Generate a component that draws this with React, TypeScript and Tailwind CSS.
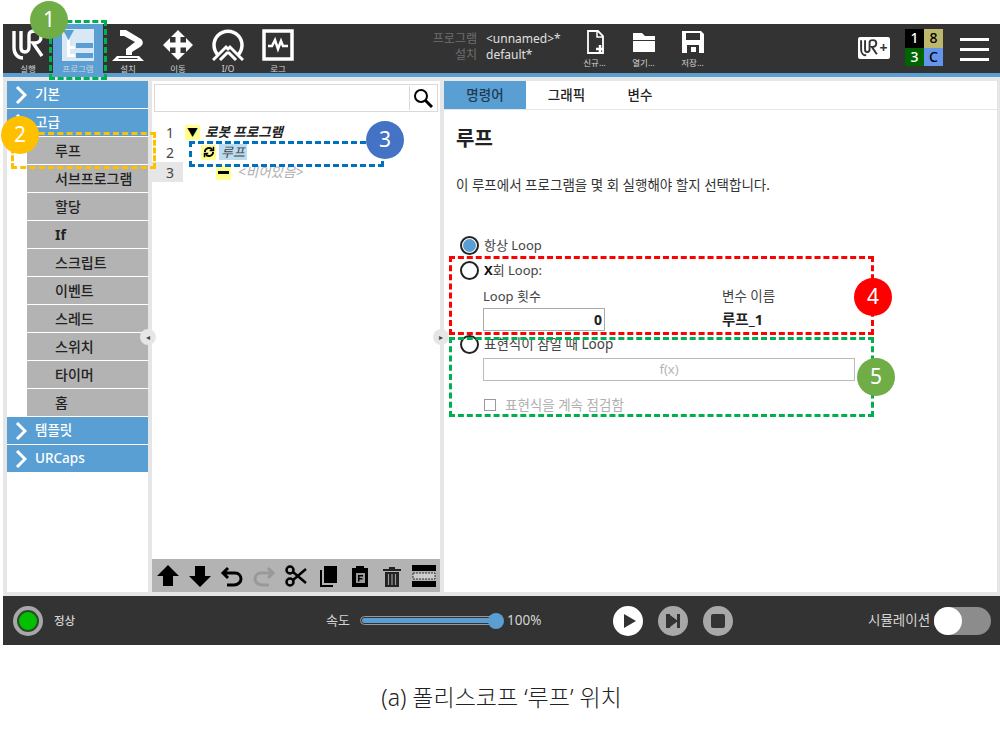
const FONT = "font-['Noto_Sans','Noto_Sans_CJK_KR',sans-serif]";

const SUB_ITEMS = ["루프", "서브프로그램", "할당", "If", "스크립트", "이벤트", "스레드", "스위치", "타이머", "홈"];

function UrLogo({ className }: { className?: string }) {
  return (
    <svg viewBox="0 0 32 32" className={className} fill="none" stroke="currentColor" strokeWidth="3.4">
      <path d="M2 2v17c0 6 4 10 9 10" />
      <path d="M9 2v17c0 3 2 4 4 4s4-2 4-5V6c0-3 3-4 6-4 4 0 6 3 6 6s-2 6-6 6h-2l9 13" />
    </svg>
  );
}

function ProgramIcon() {
  return (
    <svg viewBox="0 0 32 32" className="h-8 w-8">
      <rect x="0" y="0" width="32" height="32" fill="#d9e8f5" />
      <path d="M1 1h11L6.500 11z" fill="#5a9fd4" />
      <path d="M5 11h3v14h5v3H5zM8 17h5v3H8z" fill="#fff" />
      <rect x="14" y="14" width="17" height="5" fill="#5a9fd4" />
      <rect x="14" y="24" width="17" height="5" fill="#5a9fd4" />
    </svg>
  );
}

function RobotIcon() {
  return (
    <svg viewBox="0 0 34 32" className="h-8 w-[34px]" fill="#fff">
      <path d="M9 1h6l15 9c3 3 2 6-1 8l-8 5v3h-6v-6l9-7L13 7H9z" />
      <path d="M6 27h22l5 5H1zM7 30h20l-1-1H8z" fillRule="evenodd" />
    </svg>
  );
}

function MoveIcon() {
  return (
    <svg viewBox="0 0 32 32" className="h-8 w-8" fill="#fff">
      <path d="M16 1l7 7h-4.500v5.500H24V9l7 7-7 7v-4.500h-5.500V24H23l-7 7-7-7h4.500v-5.500H8V23l-7-7 7-7v4.500h5.500V8H9z" />
    </svg>
  );
}

function IoIcon() {
  return (
    <svg viewBox="0 0 32 32" className="h-8 w-8" fill="none" stroke="#fff" strokeWidth="3.500">
      <path d="M6 26a14 14 0 1 1 20 0" />
      <path d="M1 31l13-13 2 2 2-2 13 13" strokeWidth="3" />
      <path d="M8 31l7-7h2l7 7" strokeWidth="3" />
    </svg>
  );
}

function LogIcon() {
  return (
    <svg viewBox="0 0 32 32" className="h-8 w-8" fill="none" stroke="#fff">
      <rect x="2" y="2" width="28" height="28" strokeWidth="3.500" />
      <path d="M6 17h4l3-6 3 9 3-8 2 5h5" strokeWidth="2.500" />
    </svg>
  );
}

function HeaderTab({ label, icon, active }: { label: string; icon: React.ReactNode; active?: boolean }) {
  return (
    <div className={`flex h-full w-[50px] flex-col items-center pt-[5px] ${active ? "bg-[#5a9fd4]" : ""}`}>
      <div className="flex h-8 items-center justify-center">{icon}</div>
      <span className="mt-[2px] text-[8.500px] leading-[12px] text-[#d4d4d4]">{label}</span>
    </div>
  );
}

function FileButton({ label, children }: { label: string; children: React.ReactNode }) {
  return (
    <div className="flex w-[49px] flex-col items-center">
      <svg viewBox="0 0 24 24" className="h-[24px] w-[24px]">
        {children}
      </svg>
      <span className="mt-[3px] text-[8.500px] leading-[11px] text-[#d4d4d4]">{label}</span>
    </div>
  );
}

function SectionRow({ label }: { label: string }) {
  return (
    <div className="mb-px flex h-[27px] items-center bg-[#5a9fd4] pl-[8px] text-[13.500px] font-medium text-white">
      <svg viewBox="0 0 12 18" className="h-[18px] w-[12px] shrink-0" fill="none" stroke="#fff" strokeWidth="3">
        <path d="M2 1l8 8-8 8" />
      </svg>
      <span className="ml-[8px]">{label}</span>
    </div>
  );
}

function TreeIcon({ children }: { children: React.ReactNode }) {
  return (
    <span className="flex h-[15px] w-[15px] shrink-0 items-center justify-center bg-[#ffff8c] text-black">
      {children}
    </span>
  );
}

function LineNo({ n, active }: { n: number; active?: boolean }) {
  return (
    <div className={`flex h-5 w-[31px] items-center justify-end pr-[9px] text-[14px] text-[#444] ${active ? "bg-[#e6e6e6]" : ""}`}>
      {n}
    </div>
  );
}

function Radio({ checked }: { checked?: boolean }) {
  return (
    <span className="ml-[4px] flex h-[19px] w-[19px] shrink-0 items-center justify-center rounded-full border-2 border-[#222] bg-white">
      {checked && <span className="h-[13px] w-[13px] rounded-full bg-[#5a9fd4]" />}
    </span>
  );
}

function ToolIcon({ children }: { children: React.ReactNode }) {
  return (
    <svg viewBox="0 0 24 24" className="h-[24px] w-[24px]">
      {children}
    </svg>
  );
}

function Callout({ n, className }: { n: number; className: string }) {
  return (
    <div className={`absolute flex h-[38px] w-[38px] items-center justify-center rounded-full text-[21px] text-white ${className}`}>
      {n}
    </div>
  );
}

export default function App() {
  return (
    <div className={`relative flex h-[742px] w-[1000px] flex-col overflow-hidden bg-white pt-[24px] pl-[3px] ${FONT}`}>
      {/* Header */}
      <header className="flex h-[49px] shrink-0 items-stretch bg-[#333333]">
        <HeaderTab label="실행" icon={<UrLogo className="h-8 w-8 text-white" />} />
        <HeaderTab label="프로그램" icon={<ProgramIcon />} active />
        <HeaderTab label="설치" icon={<RobotIcon />} />
        <HeaderTab label="이동" icon={<MoveIcon />} />
        <HeaderTab label="I/O" icon={<IoIcon />} />
        <HeaderTab label="로그" icon={<LogIcon />} />

        <div className="ml-[126px] flex w-[141px] flex-col justify-center gap-[2px] pb-[3px] text-[12px] leading-[14px]">
          <div className="flex">
            <span className="w-[48px] text-right whitespace-nowrap text-[#6f6f6f]">프로그램</span>
            <span className="ml-[9px] text-[#e0e0e0]">&lt;unnamed&gt;*</span>
          </div>
          <div className="flex">
            <span className="w-[48px] text-right text-[#6f6f6f]">설치</span>
            <span className="ml-[9px] text-[#e0e0e0]">default*</span>
          </div>
        </div>

        <div className="flex items-start pt-[6px]">
          <FileButton label="신규...">
            <path d="M5 1h10l5 5v17H5z" fill="none" stroke="#fff" strokeWidth="1.800" />
            <path d="M14 1v6h6" fill="none" stroke="#fff" strokeWidth="1.500" />
            <path d="M17 15v8M13 19h8" stroke="#fff" strokeWidth="2.500" />
          </FileButton>
          <FileButton label="열기...">
            <path d="M1 3h9l3 3h10v4H1z" fill="#fff" />
            <path d="M1 11h22v11H1z" fill="#fff" />
          </FileButton>
          <FileButton label="저장...">
            <path
              d="M1 1h19l3 3v19H1zM5 3v7h14V3zM6 15v8h12v-8zM10 17h5v5h-5z"
              fill="#fff"
              fillRule="evenodd"
            />
          </FileButton>
        </div>

        <div className="ml-[141px] flex items-center pb-[2px]">
          <div className="flex h-[22px] w-[32px] items-center justify-center gap-px rounded-[2px] bg-white text-[#333]">
            <UrLogo className="h-[18px] w-[18px]" />
            <span className="text-[14px] leading-none font-bold">+</span>
          </div>
        </div>

        <div className="mt-[5px] ml-[15px] grid h-[37px] w-[38px] grid-cols-2 grid-rows-2 text-center text-[14px] leading-[18px] font-medium">
          <span className="bg-black text-white">1</span>
          <span className="bg-[#bdb76b] text-black">8</span>
          <span className="bg-[#006400] text-white">3</span>
          <span className="bg-[#6495ed] text-black">C</span>
        </div>

        <div className="ml-[17px] flex w-[29px] flex-col gap-[7px] pt-[14px]">
          <span className="h-[3px] bg-white" />
          <span className="h-[3px] bg-white" />
          <span className="h-[3px] bg-white" />
        </div>
      </header>
      <div className="h-[4px] shrink-0 bg-[#5a9fd4]" />

      {/* Body */}
      <main className="flex h-[519px] shrink-0 bg-[#e6e6e6] pt-[4px] pr-[3px] pb-[4px] pl-[4px]">
        <aside className="h-full w-[141px] shrink-0 bg-white">
          <SectionRow label="기본" />
          <SectionRow label="고급" />
          <div className="ml-[20px]">
            {SUB_ITEMS.map((item) => (
              <div
                key={item}
                className={`mb-px flex h-[27px] items-center bg-[#b3b3b3] pl-[28px] text-[14px] text-[#222] ${item === "If" ? "font-bold" : "font-medium"}`}
              >
                {item}
              </div>
            ))}
          </div>
          <SectionRow label="템플릿" />
          <SectionRow label="URCaps" />
        </aside>

        <section className="ml-[4px] flex h-full w-[288px] shrink-0 flex-col bg-white">
          <div className="mx-[2px] mt-[3px] flex h-[28px] items-center justify-end border border-[#d9d9d9] bg-white pr-[4px]">
            <span className="mr-[3px] h-[24px] w-px bg-[#d9d9d9]" />
            <svg viewBox="0 0 20 20" className="h-[20px] w-[20px]" fill="none" stroke="#000">
              <circle cx="8" cy="8" r="6" strokeWidth="2" />
              <path d="M12.500 12.500L19 19" strokeWidth="3" />
            </svg>
          </div>
          <div className="mt-[10px] flex flex-1 text-[13.500px]">
            <div>
              <LineNo n={1} />
              <LineNo n={2} />
              <LineNo n={3} active />
            </div>
            <div>
              <div className="flex h-5 items-center pl-[2px]">
                <TreeIcon>
                  <span className="text-[11px] leading-none">▼</span>
                </TreeIcon>
                <span className="ml-[5px] font-bold text-[#222] italic">로봇 프로그램</span>
              </div>
              <div className="flex h-5 items-center pl-[18px]">
                <TreeIcon>
                  <svg viewBox="0 0 16 16" className="h-3 w-3" fill="none" stroke="#000" strokeWidth="2.500">
                    <path d="M2.500 8a5.500 5.500 0 0 1 10-3M13.500 8a5.500 5.500 0 0 1-10 3" />
                    <path d="M14 1v5H9M2 15v-5h5" strokeWidth="2" />
                  </svg>
                </TreeIcon>
                <span className="ml-[3px] bg-[#bcdcf2] px-[2px] text-[13px] leading-[16px] text-[#444] italic">루프</span>
              </div>
              <div className="flex h-5 items-center pl-[33px]">
                <TreeIcon>
                  <span className="h-[3px] w-[11px] bg-black" />
                </TreeIcon>
                <span className="ml-[7px] text-[#b0b0b0] italic">&lt;비어있음&gt;</span>
              </div>
            </div>
          </div>
          <div className="flex h-[33px] items-center gap-[8px] bg-[#b3b3b3] pl-[4px]">
            <ToolIcon>
              <path d="M12 1l11 11h-6v10H7V12H1z" fill="#000" />
            </ToolIcon>
            <ToolIcon>
              <path d="M12 23L1 12h6V2h10v10h6z" fill="#000" />
            </ToolIcon>
            <ToolIcon>
              <path d="M8 4L3 9l5 5M3 9h12c4 0 6 3 6 6s-3 6-7 6H7" fill="none" stroke="#000" strokeWidth="3" />
            </ToolIcon>
            <ToolIcon>
              <path d="M16 4l5 5-5 5M21 9H9c-4 0-6 3-6 6s3 6 7 6h7" fill="none" stroke="#999" strokeWidth="3" />
            </ToolIcon>
            <ToolIcon>
              <circle cx="6" cy="6" r="3.500" fill="none" stroke="#000" strokeWidth="2.500" />
              <circle cx="6" cy="18" r="3.500" fill="none" stroke="#000" strokeWidth="2.500" />
              <path d="M9 8l13 11M9 16L22 5" stroke="#000" strokeWidth="2.500" />
            </ToolIcon>
            <ToolIcon>
              <path d="M8 2h13v17H8z" fill="#000" />
              <path d="M5 6v16h12" fill="none" stroke="#000" strokeWidth="2" />
            </ToolIcon>
            <ToolIcon>
              <path d="M4 4h4V2h8v2h4v19H4z" fill="#000" />
              <path d="M8 9h9v10H8z" fill="#9a9a9a" />
              <path d="M10 11h5v1.500h-3.500V14h3v1.500h-3v2H10z" fill="#000" />
            </ToolIcon>
            <ToolIcon>
              <path d="M3 5h18v2H3zM9 3h6v2H9z" fill="#222" />
              <path d="M5 8h14v15H5z" fill="#222" />
              <path d="M8.500 10v11M12 10v11M15.500 10v11" stroke="#9a9a9a" strokeWidth="1.200" />
            </ToolIcon>
            <ToolIcon>
              <path d="M0 1h24v6H0zM0 17h24v6H0z" fill="#000" />
              <rect x="1" y="9" width="22" height="6" fill="#ccc" stroke="#333" strokeDasharray="2 1" />
            </ToolIcon>
          </div>
        </section>

        <section className="ml-[4px] h-full w-[553px] shrink-0 bg-white">
          <nav className="flex h-[29px] border-b border-[#e6e6e6] text-[13.500px] font-medium text-[#222]">
            <div className="flex w-[82px] items-center justify-center bg-[#5a9fd4] text-[#1f3a52]">명령어</div>
            <div className="flex w-[81px] items-center justify-center">그래픽</div>
            <div className="flex w-[66px] items-center justify-center">변수</div>
          </nav>
          <div className="pl-[12px]">
            <h2 className="mt-[17px] text-[20px] leading-[24px] font-bold text-[#222]">루프</h2>
            <p className="mt-[26px] text-[13.500px] leading-[16px] text-[#333]">
              이 루프에서 프로그램을 몇 회 실행해야 할지 선택합니다.
            </p>
            <div className="mt-[43px] flex h-[19px] items-center text-[13px] text-[#444]">
              <Radio checked />
              <span className="ml-[5px]">항상 Loop</span>
            </div>
            <div className="mt-[6px] flex h-[19px] items-center text-[13px] text-[#444]">
              <Radio />
              <span className="ml-[5px]">
                <b className="text-[#111]">X</b>회 Loop:
              </span>
            </div>
            <div className="mt-[8px] ml-[27px] flex text-[13px] text-[#444]">
              <div className="w-[239px]">
                <div className="leading-[16px]">Loop 횟수</div>
                <div className="mt-[4px] flex h-[23px] w-[122px] items-center justify-end border border-[#aaa] pr-[2px] text-[14px] font-bold text-[#222]">
                  0
                </div>
              </div>
              <div>
                <div className="text-[13.500px] leading-[16px]">변수 이름</div>
                <div className="mt-[4px] flex h-[23px] items-center text-[14.500px] font-bold text-[#222]">루프_1</div>
              </div>
            </div>
            <div className="mt-[4px] flex h-[19px] items-center text-[13.500px] text-[#444]">
              <Radio />
              <span className="ml-[5px]">표현식이 참일 때 Loop</span>
            </div>
            <div className="mt-[4px] ml-[27px] flex h-[23px] w-[372px] items-center justify-center border border-[#bbb] text-[13px] text-[#b5b5b5]">
              f(x)
            </div>
            <div className="mt-[14px] ml-[28px] flex items-center text-[13.500px] text-[#b0b0b0]">
              <span className="h-[12px] w-[12px] border border-[#999]" />
              <span className="ml-[9px]">표현식을 계속 점검함</span>
            </div>
          </div>
        </section>
      </main>

      {/* Footer */}
      <footer className="flex h-[49px] shrink-0 items-center bg-[#333333] text-[#d4d4d4]">
        <div className="ml-[10px] flex h-[30px] w-[30px] items-center justify-center rounded-full bg-[#a8a8a8]">
          <span className="h-[22px] w-[22px] rounded-full border-2 border-[#2c4a2c] bg-[#00c000]" />
        </div>
        <span className="ml-[11px] w-[23px] text-[11.500px] font-medium">정상</span>
        <span className="ml-[249px] w-[24px] text-[13px] whitespace-nowrap">속도</span>
        <div className="relative ml-[10px] flex h-[9px] w-[140px] items-center rounded-full border border-[#999]">
          <div className="mx-px h-[5px] flex-1 rounded-full bg-[#5a9fd4]" />
          <span className="absolute right-[-5px] h-4 w-4 rounded-full bg-[#5a9fd4]" />
        </div>
        <span className="ml-[7px] w-[36px] text-[13.500px]">100%</span>
        <span className="ml-[70px] flex h-[30px] w-[30px] items-center justify-center rounded-full bg-white">
          <svg viewBox="0 0 16 16" className="ml-[2px] h-4 w-4">
            <path d="M3 1l12 7-12 7z" fill="#333" />
          </svg>
        </span>
        <span className="ml-[15px] flex h-[30px] w-[30px] items-center justify-center rounded-full bg-[#a8a8a8]">
          <svg viewBox="0 0 16 16" className="h-4 w-4">
            <path d="M1 1h4v14H1zM5 2l8 6-8 6zM12 1h3v14h-3z" fill="#333" />
          </svg>
        </span>
        <span className="ml-[15px] flex h-[30px] w-[30px] items-center justify-center rounded-full bg-[#a8a8a8]">
          <span className="h-[14px] w-[14px] rounded-[2px] bg-[#333]" />
        </span>
        <span className="ml-[135px] w-[64px] text-[13.500px] whitespace-nowrap">시뮬레이션</span>
        <span className="ml-[2px] flex h-[28px] w-[57px] items-center rounded-full bg-[#8c8c8c]">
          <span className="h-[28px] w-[28px] rounded-full bg-white" />
        </span>
      </footer>

      {/* Caption */}
      <p className="mt-[37px] text-center text-[23px] leading-[30px] font-light text-[#222]">
        (a) 폴리스코프 ‘루프’ 위치
      </p>

      {/* Splitter handles */}
      <span className="absolute top-[329px] left-[140px] flex h-4 w-4 items-center justify-center rounded-full bg-[#e6e6e6] text-[8px] text-[#444]">◂</span>
      <span className="absolute top-[329px] left-[433px] flex h-4 w-4 items-center justify-center rounded-full bg-[#e6e6e6] text-[8px] text-[#444]">▸</span>

      {/* Annotations */}
      <div className="absolute top-[20px] left-[49px] h-[60px] w-[58px] border-[3px] border-dashed border-[#00b050]" />
      <Callout n={1} className="top-[1px] left-[30px] bg-[#70ad47]" />
      <div className="absolute top-[132px] left-[11px] h-[37px] w-[145px] border-[3px] border-dashed border-[#ffc000]" />
      <Callout n={2} className="top-[116px] left-[1px] bg-[#ffc000]" />
      <div className="absolute top-[141px] left-[189px] h-[26px] w-[195px] border-[3px] border-dashed border-[#0070c0]" />
      <Callout n={3} className="top-[121px] left-[366px] bg-[#4472c4]" />
      <div className="absolute top-[256px] left-[449px] h-[79px] w-[425px] border-[3px] border-dashed border-[#ff0000]" />
      <Callout n={4} className="top-[278px] left-[854px] bg-[#ff0000]" />
      <div className="absolute top-[337px] left-[449px] h-[80px] w-[425px] border-[3px] border-dashed border-[#00b050]" />
      <Callout n={5} className="top-[358px] left-[857px] bg-[#70ad47]" />
    </div>
  );
}
